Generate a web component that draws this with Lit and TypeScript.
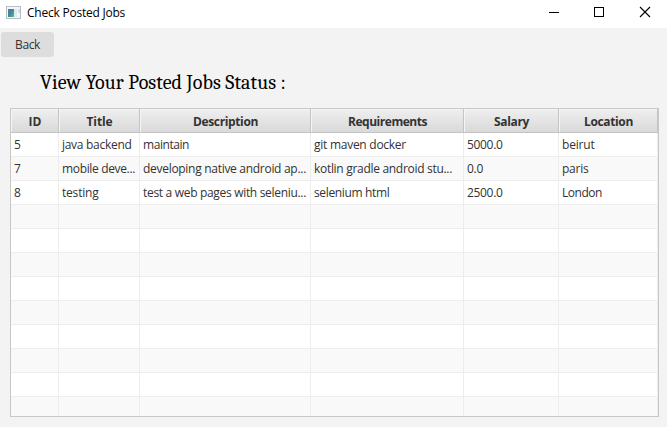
import { LitElement, html, css } from "lit";
import { customElement, property } from "lit/decorators.js";

/** A single-line label whose tracking is adjusted to fill a given width. */
@customElement("fit-text")
class FitText extends LitElement {
  @property({ type: Number }) width = 0;
  @property() text = "";
  static styles = css`
    :host { display: inline-block; white-space: pre; }
    .label { display: inline-block; }
  `;
  render() {
    return html`<span class="label">${this.text}</span>`;
  }
  updated() {
    const el = this.renderRoot.querySelector(".label") as HTMLElement;
    el.style.letterSpacing = "0px";
    const natural = el.getBoundingClientRect().width;
    const gap = (this.width - natural) / this.text.length;
    el.style.letterSpacing = gap.toFixed(3) + "px";
  }
}

type Cell = [text: string, width: number];

const headers: Cell[] = [
  ["ID", 13], ["Title", 26], ["Description", 65],
  ["Requirements", 79], ["Salary", 35], ["Location", 49],
];

const jobs: Cell[][] = [
  [["5", 7], ["java backend", 69.5], ["maintain", 46], ["git maven docker", 92], ["5000.0", 35.5], ["beirut", 32.5]],
  [["7", 7], ["mobile deve...", 73], ["developing native android ap...", 163], ["kotlin gradle android stu...", 138], ["0.0", 16], ["paris", 26.5]],
  [["8", 7], ["testing", 36.5], ["test a web pages with seleniu...", 163], ["selenium html", 75.5], ["2500.0", 35.5], ["London", 40]],
];

const VISIBLE_ROWS = 12;

@customElement("app-root")
class AppRoot extends LitElement {
  static styles = css`
    :host {
      display: flex; flex-direction: column; box-sizing: border-box;
      width: 667px; height: 427px; overflow: hidden; background: #f3f3f3;
      font: 12px/16px "Open Sans", "Noto Sans", sans-serif; color: #333;
    }
    .titlebar {
      display: flex; align-items: center; flex: none; height: 28px;
      background: #fff; color: #000; padding-left: 6px;
    }
    .app-icon { display: block; margin-right: 6px; margin-top: -4px; }
    .name { flex: 1; margin-top: -2px; }
    .controls { display: flex; height: 28px; }
    .controls svg { display: block; width: 45.5px; height: 28px; }
    .back {
      display: flex; align-items: center; justify-content: center;
      box-sizing: border-box; width: 53px; height: 25px; margin: 4px 0 0 1px; padding: 1px 0 0;
      border: 0; border-radius: 3px; background: #ddd; color: #333; font: inherit;
    }
    h1 {
      margin: 13px 0 0 40px; height: 26px; color: #000;
      font: 400 20px/25px "Caladea", "Cambria", "Liberation Serif", serif;
    }
    .table {
      box-sizing: border-box; width: 649px; height: 309px; margin: 12px 0 0 10px;
      border: 1px solid #c8c8c8; overflow: hidden; background: #fff;
    }
    .row {
      display: grid; grid-template-columns: 48px 81px 171px 153px 95px 99px; height: 24px;
    }
    .row:nth-child(odd) { background: #f9f9f9; }
    .cell {
      box-sizing: border-box; padding: 4px 0 0 3px; overflow: hidden;
      border-right: 1px solid #ededed; border-bottom: 1px solid #ededed;
    }
    .head {
      box-sizing: border-box; display: flex; justify-content: center; padding: 5px 0 0 1px;
      font-weight: 700; color: #333;
      border-right: 1px solid #c4c4c4; border-bottom: 1px solid #c4c4c4;
      background: linear-gradient(#efefef, #d9d9d9);
      box-shadow: inset 1px 1px 0 #f5f5f5;
    }
  `;

  private icon() {
    return html`<svg class="app-icon" width="15" height="13" viewBox="0 0 15 13">
      <defs><linearGradient id="pane" x1="0" y1="0" x2="1" y2="1">
        <stop offset="0" stop-color="#4a78b0" /><stop offset=".5" stop-color="#3f8a94" /><stop offset="1" stop-color="#62bd86" />
      </linearGradient></defs>
      <rect x=".5" y=".5" width="14" height="12" fill="#f4f6f7" stroke="#b9bdc1" />
      <rect x="2" y="3" width="6" height="8" fill="url(#pane)" />
      <rect x="8" y="3" width="3" height="8" fill="#dfeaf0" />
      <rect x="12" y="3" width="2" height="4" fill="#cfe3de" />
    </svg>`;
  }

  render() {
    return html`
      <div class="titlebar">
        ${this.icon()}
        <fit-text class="name" .width=${98} .text=${"Check Posted Jobs"}></fit-text>
        <div class="controls">
          <svg viewBox="0 0 45.5 28"><path d="M17.5 12.5h10" stroke="#000" fill="none" shape-rendering="crispEdges" /></svg>
          <svg viewBox="0 0 45.5 28"><path d="M18 7.5h9v9h-9z" stroke="#000" fill="none" shape-rendering="crispEdges" /></svg>
          <svg viewBox="0 0 45.5 28"><path d="M18 7l10 10M28 7l-10 10" stroke="#000" stroke-width="1.1" fill="none" /></svg>
        </div>
      </div>
      <button class="back"><fit-text .width=${25} .text=${"Back"}></fit-text></button>
      <h1><fit-text .width=${246} .text=${"View Your Posted Jobs Status :"}></fit-text></h1>
      <div class="table">
        <div class="row">
          ${headers.map(([t, w]) => html`<div class="head"><fit-text .width=${w} .text=${t}></fit-text></div>`)}
        </div>
        ${Array.from({ length: VISIBLE_ROWS }, (_, r) => html`<div class="row">
          ${headers.map((_h, c) => {
            const cell = jobs[r]?.[c];
            return html`<div class="cell">${cell
              ? html`<fit-text .width=${cell[1]} .text=${cell[0]}></fit-text>` : ""}</div>`;
          })}
        </div>`)}
      </div>
    `;
  }
}
